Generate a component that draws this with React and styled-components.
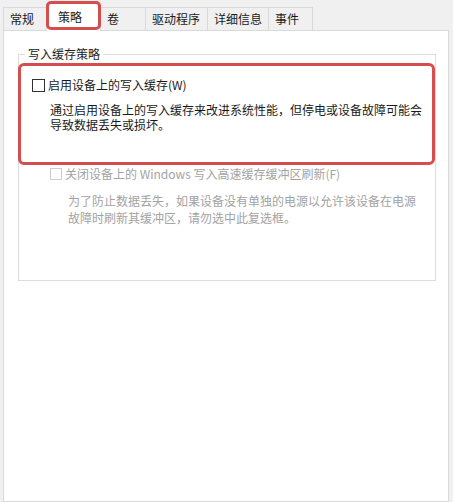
import React from "react";
import styled, { createGlobalStyle } from "styled-components";

const GlobalStyle = createGlobalStyle`
  html, body {
    margin: 0;
    padding: 0;
    background: #f0f0f0;
  }
  body {
    font-family: "Noto Sans CJK SC", "Noto Sans", sans-serif;
    font-size: 12px;
    color: #1a1a1a;
  }
`;

const Window = styled.div`
  width: 453px;
  height: 502px;
  overflow: hidden;
  background: #f0f0f0;
`;

const TabStrip = styled.div`
  display: flex;
  align-items: flex-end;
  height: 30px;
  padding-left: 3px;
  box-sizing: border-box;
`;

const Tab = styled.div`
  position: relative;
  box-sizing: border-box;
  width: ${(p) => p.$w}px;
  height: ${(p) => (p.$active ? 28 : 23)}px;
  margin-right: -1px;
  margin-bottom: ${(p) => (p.$active ? -1 : 0)}px;
  padding-left: ${(p) => (p.$active ? 11 : 6)}px;
  padding-bottom: ${(p) => (p.$active ? 2 : 0)}px;
  display: flex;
  align-items: center;
  border: 1px solid #d9d9d9;
  border-bottom: none;
  background: ${(p) => (p.$active ? "#ffffff" : "#f0f0f0")};
  z-index: ${(p) => (p.$active ? 2 : 1)};
  line-height: 16px;
  white-space: nowrap;

  ${(p) =>
    p.$marked &&
    `
    &::after {
      content: "";
      position: absolute;
      top: -3px;
      left: -1px;
      right: -1px;
      bottom: 1px;
      border: 3px solid #d64d4d;
      border-radius: 5px;
    }
  `}
`;

const Panel = styled.div`
  margin-left: 3px;
  width: 446px;
  height: 472px;
  box-sizing: border-box;
  background: #ffffff;
  border: 1px solid #d9d9d9;
  padding: 15px 0 0 14px;
`;

const Group = styled.fieldset`
  margin: 0;
  width: 418px;
  height: 235px;
  box-sizing: border-box;
  border: 1px solid #dcdcdc;
  padding: 0;
  min-inline-size: 0;
`;

const Legend = styled.legend`
  margin-left: 6px;
  padding: 0 3px;
  line-height: 16px;
  color: #222;
`;

const Highlight = styled.div`
  margin: 1px 0 0 -1px;
  width: 417px;
  height: 102px;
  box-sizing: border-box;
  border: 3px solid #d64d4d;
  border-radius: 6px;
  padding: 11px 0 0 11px;
`;

const Option = styled.div`
  padding-left: ${(p) => p.$indent || 0}px;
  margin-top: ${(p) => p.$top || 0}px;
  color: ${(p) => (p.$disabled ? "#a3a3a3" : "#1a1a1a")};
`;

const Row = styled.label`
  display: flex;
  align-items: center;
  gap: 3px;
  line-height: 16px;
`;

const Box = styled.span`
  display: inline-block;
  box-sizing: border-box;
  width: ${(p) => (p.$disabled ? 12 : 13)}px;
  height: ${(p) => (p.$disabled ? 12 : 13)}px;
  border: 1px solid ${(p) => (p.$disabled ? "#cccccc" : "#333333")};
  background: #fff;
  flex: none;
`;

const Desc = styled.p`
  margin: ${(p) => p.$gap}px 0 0 18px;
  width: ${(p) => p.$w}px;
  line-height: ${(p) => p.$lh}px;
`;

const tabs = [
  { label: "常规", w: 44 },
  { label: "策略", w: 55, active: true },
  { label: "卷", w: 46 },
  { label: "驱动程序", w: 63 },
  { label: "详细信息", w: 62 },
  { label: "事件", w: 45 },
];

export default function App() {
  return (
    <Window>
      <GlobalStyle />
      <TabStrip>
        {tabs.map((t) => (
          <Tab key={t.label} $w={t.w} $active={t.active} $marked={t.active}>
            {t.label}
          </Tab>
        ))}
      </TabStrip>
      <Panel>
        <Group>
          <Legend>写入缓存策略</Legend>
          <Highlight>
            <Option>
              <Row>
                <Box />
                启用设备上的写入缓存(W)
              </Row>
              <Desc $gap={9} $lh={15} $w={376}>
                通过启用设备上的写入缓存来改进系统性能，但停电或设备故障可能会导致数据丢失或损坏。
              </Desc>
            </Option>
          </Highlight>
          <Option $indent={31} $top={1} $disabled>
            <Row>
              <Box $disabled />
              关闭设备上的 Windows 写入高速缓存缓冲区刷新(F)
            </Row>
            <Desc $gap={10} $lh={17} $w={350}>
              为了防止数据丢失，如果设备没有单独的电源以允许该设备在电源故障时刷新其缓冲区，请勿选中此复选框。
            </Desc>
          </Option>
        </Group>
      </Panel>
    </Window>
  );
}
